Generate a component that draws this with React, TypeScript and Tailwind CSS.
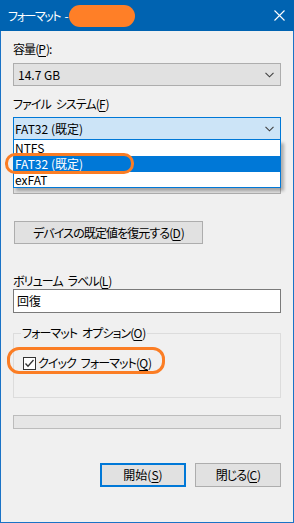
import React from 'react';

const font = "[font-family:'Noto_Sans_CJK_JP','Noto_Sans',sans-serif] [font-feature-settings:'palt']";
// kana in the Windows UI font run narrower than in Noto, so tighten Japanese labels
const jp = 'tracking-[-0.9px] [word-spacing:3px]';

const Chevron: React.FC = () => (
    <svg width="9" height="6" viewBox="0 0 9 6" className="shrink-0">
        <polyline points="0.5,0.8 4.5,4.8 8.5,0.8" fill="none" stroke="#404040" strokeWidth="1.1" />
    </svg>
);

const Key: React.FC<{ k: string }> = ({ k }) => <span className="underline underline-offset-2 tracking-normal">{k}</span>;

const App: React.FC = () => {
    return (
        <div className={`relative w-[294px] h-[523px] flex flex-col bg-[#f0f0f0] border-x border-b border-[#1a73c6] text-[12px] leading-[16px] text-black ${font}`}>
            {/* title bar */}
            <div className="h-[31px] shrink-0 bg-[#0063b1] flex items-center pl-[8px] pr-[9px] -mx-px">
                <span className="text-white tracking-[-1.4px] [word-spacing:3px]">フォーマット -</span>
                <div className="ml-[2px] w-[66px] h-[22px] rounded-full bg-[#ff7f27]" />
                <div className="flex-1" />
                <svg width="11" height="11" viewBox="0 0 11 11">
                    <path d="M0.5 0.5 L10.5 10.5 M10.5 0.5 L0.5 10.5" stroke="white" strokeWidth="1.1" />
                </svg>
            </div>

            <div className="flex flex-col px-[12px] pt-[10px]">
                <div className={`h-[16px] ${jp}`}>容量(<Key k="P" />):</div>
                <div className="mt-[6px] h-[23px] bg-[#e1e1e1] border border-[#adadad] flex items-center pl-[4px] pr-[6px]">
                    <span className="flex-1">14.7 GB</span>
                    <Chevron />
                </div>

                <div className={`mt-[10px] h-[16px] ${jp}`}>ファイル システム(<Key k="F" />)</div>
                <div className="relative z-10 mt-[5px]">
                    <div className="h-[23px] bg-[#cce4f7] border border-[#0078d7] flex items-center pl-[1px] pr-[6px]">
                        <span className="flex-1">FAT32 (既定)</span>
                        <Chevron />
                    </div>
                    <div className="absolute left-0 right-0 top-full bg-white border-x border-b border-[#0078d7] shadow-[3px_3px_3px_rgba(0,0,0,0.28)]">
                        <div className="h-[16px] pl-[1px] flex items-center">NTFS</div>
                        <div className="h-[16px] pl-[1px] flex items-center bg-[#0078d7] text-white">FAT32 (既定)</div>
                        <div className="h-[15px] pl-[1px] flex items-center">exFAT</div>
                    </div>
                </div>

                {/* allocation unit row, hidden behind the open list */}
                <div className={`invisible mt-[10px] h-[16px] ${jp}`}>アロケーション ユニット サイズ(A)</div>
                <div className="mt-[5px] h-[23px] bg-[#e1e1e1] border border-[#adadad] flex items-center pl-[4px] pr-[6px]">
                    <span className="flex-1 invisible">32 KB</span>
                    <Chevron />
                </div>

                <div className={`mt-[27px] ml-px w-[189px] h-[23px] bg-[#e1e1e1] border border-[#adadad] flex items-center justify-center ${jp}`}>
                    デバイスの既定値を復元する(<Key k="D" />)
                </div>

                <div className={`mt-[29px] h-[16px] ${jp}`}>ボリューム ラベル(<Key k="L" />)</div>
                <div className="h-[24px] bg-white border border-[#7a7a7a] flex items-center pl-[3px]">回復</div>

                <div className="relative mt-[20px] h-[65px] border border-[#dcdcdc] pt-[21px] pl-[9px]">
                    <span className={`absolute left-[7px] -top-[9px] px-px bg-[#f0f0f0] ${jp}`}>フォーマット オプション(<Key k="O" />)</span>
                    <div className="flex items-center h-[16px]">
                        <div className="w-[13px] h-[13px] border border-[#333333] bg-white flex items-center justify-center">
                            <svg width="11" height="11" viewBox="0 0 11 11">
                                <polyline points="1.5,5.5 4,8.2 9.5,2" fill="none" stroke="#333333" strokeWidth="1.3" />
                            </svg>
                        </div>
                        <span className={`ml-[2px] ${jp}`}>クイック フォーマット(<Key k="Q" />)</span>
                    </div>
                </div>

                <div className="mt-[17px] h-[14px] bg-[#e6e6e6] border border-[#bcbcbc]" />

                <div className="mt-[34px] flex justify-end gap-[9px]">
                    <div className="w-[86px] h-[24px] bg-[#e1e1e1] border-2 border-[#0078d7] flex items-center justify-center">
                        開始(<Key k="S" />)
                    </div>
                    <div className={`w-[86px] h-[24px] bg-[#e1e1e1] border border-[#adadad] flex items-center justify-center ${jp}`}>
                        閉じる(<Key k="C" />)
                    </div>
                </div>
            </div>

            {/* orange highlights */}
            <div className="absolute z-20 left-[4px] top-[153px] w-[129px] h-[21px] rounded-[10px] border-[3px] border-[#fb7d24] pointer-events-none" />
            <div className="absolute z-20 left-[6px] top-[347px] w-[158px] h-[27px] rounded-[12px] border-[3px] border-[#fb7d24] pointer-events-none" />
        </div>
    );
};

export default App;
